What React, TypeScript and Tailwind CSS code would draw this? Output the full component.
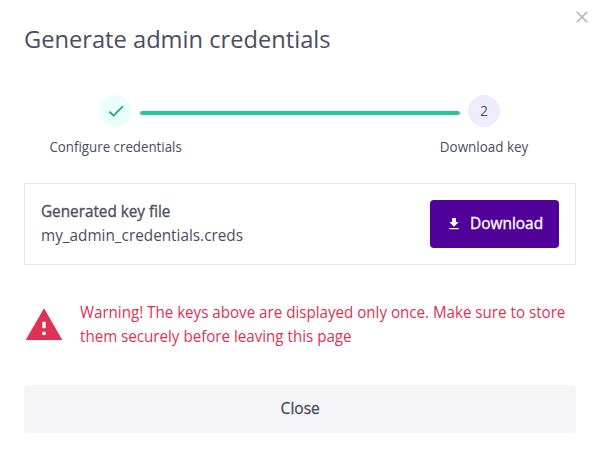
import { MdCheck, MdClose, MdDownload, MdWarning } from "react-icons/md";

function Stepper() {
  return (
    <div className="mt-10 flex h-16 items-start">
      <div className="ml-[26px] flex w-[132px] shrink-0 flex-col items-center">
        <span className="flex size-8 items-center justify-center rounded-full bg-[#e8fffc] text-[#169b7b]">
          <MdCheck size={20} />
        </span>
        <span className="mt-2.5 origin-center scale-x-[0.95] text-sm leading-5 whitespace-nowrap">Configure credentials</span>
      </div>
      <div className="mt-4 -mr-5 -ml-[42px] h-1 w-80 shrink-0 rounded-[2px] bg-[#23c6a1]" />
      <div className="flex w-[88px] shrink-0 flex-col items-center">
        <span className="flex size-8 items-center justify-center rounded-full bg-[#eeecff] text-sm">
          <span className="scale-x-[0.95]">2</span>
        </span>
        <span className="mt-2.5 origin-center scale-x-[0.96] text-sm leading-5 whitespace-nowrap">Download key</span>
      </div>
    </div>
  );
}

export default function App() {
  return (
    <main className="relative h-[453px] w-[595px] overflow-hidden bg-white px-6 pt-[23px] font-['Open_Sans','Noto_Sans',sans-serif] text-base text-[#4b4e61]">
      <button aria-label="Dismiss" className="absolute top-[7px] right-[3px] text-[#b5b7c7]">
        <MdClose size={20} />
      </button>
      <h1 className="h-8 w-max origin-left scale-x-[0.986] text-2xl leading-8 whitespace-nowrap">Generate admin credentials</h1>
      <Stepper />
      <section className="mt-6 flex h-[82px] w-[552px] items-center justify-between border border-[#e5e6ee] px-4">
        <div className="-mt-0.5 leading-6">
          <div className="w-max origin-left scale-x-[0.955] [-webkit-text-stroke:0.35px_currentColor]">Generated key file</div>
          <div className="w-max origin-left scale-x-[0.957]">my_admin_credentials.creds</div>
        </div>
        <button className="flex h-12 w-[129px] items-center gap-2 rounded bg-[#4f0199] pl-4 text-white">
          <MdDownload size={16} />
          <span className="-mt-0.5 origin-left scale-x-[0.965] [-webkit-text-stroke:0.35px_currentColor]">Download</span>
        </button>
      </section>
      <section className="mt-9 flex h-12 items-center text-[#df3253]">
        <MdWarning size={40} className="shrink-0" />
        <p className="-mt-0.5 ml-4 w-max origin-left scale-x-[0.946] leading-6 whitespace-nowrap">
          Warning! The keys above are displayed only once. Make sure to store
          <br />
          them securely before leaving this page
        </p>
      </section>
      <button className="mt-9 h-12 w-[552px] rounded bg-[#f5f5f8] pb-0.5">
        <span className="inline-block scale-x-[0.97] [-webkit-text-stroke:0.35px_currentColor]">Close</span>
      </button>
    </main>
  );
}
